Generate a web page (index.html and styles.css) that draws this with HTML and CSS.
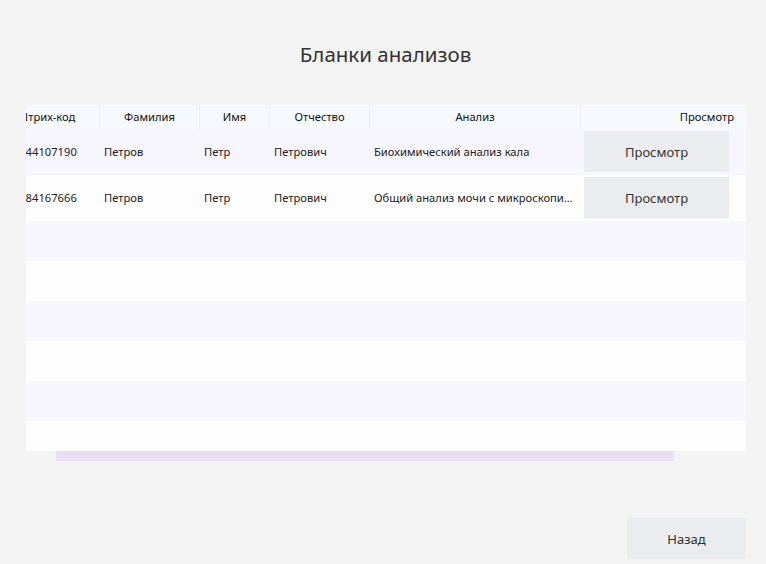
FILE: index.html
```html
<!DOCTYPE html>
<html lang="ru">
<head>
<meta charset="utf-8">
<title>Бланки анализов</title>
<link rel="stylesheet" href="styles.css">
</head>
<body>
<div class="window">
  <h1 class="title">Бланки анализов</h1>
  <div class="grid-area">
    <div class="grid-clip">
      <div class="grid">
        <div class="row head">
          <div class="hc">Штрих-код</div>
          <div class="hc">Фамилия</div>
          <div class="hc">Имя</div>
          <div class="hc">Отчество</div>
          <div class="hc">Анализ</div>
          <div class="hc last">Просмотр</div>
        </div>
        <div class="row data odd">
          <div class="c code">460044107190</div>
          <div class="c">Петров</div>
          <div class="c">Петр</div>
          <div class="c">Петрович</div>
          <div class="c">Биохимический анализ кала</div>
          <div class="c btn-cell"><button class="view-btn">Просмотр</button></div>
        </div>
        <div class="row data even">
          <div class="c code">460084167666</div>
          <div class="c">Петров</div>
          <div class="c">Петр</div>
          <div class="c">Петрович</div>
          <div class="c">Общий анализ мочи с микроскопией осадка</div>
          <div class="c btn-cell"><button class="view-btn">Просмотр</button></div>
        </div>
        <div class="row empty odd"></div>
        <div class="row empty even"></div>
        <div class="row empty odd"></div>
        <div class="row empty even"></div>
        <div class="row empty odd"></div>
        <div class="row empty even"></div>
      </div>
    </div>
    <div class="hscroll"></div>
  </div>
  <div class="footer">
    <button class="back-btn">Назад</button>
  </div>
</div>
</body>
</html>
```
FILE: styles.css
```css
html, body {
  margin: 0;
  padding: 0;
  background: #f3f3f3;
}
body {
  font-family: "Noto Sans", "Open Sans", sans-serif;
  color: #222;
}
.window {
  width: 766px;
  height: 564px;
  display: flex;
  flex-direction: column;
}
.title {
  margin: 0;
  height: 105px;
  box-sizing: border-box;
  padding: 40px 0 0 5px;
  text-align: center;
  font-weight: normal;
  font-size: 20.5px;
  line-height: 28px;
  color: #333;
}
.grid-area {
  padding-left: 26px;
  display: flex;
  flex-direction: column;
}
.grid-clip {
  width: 720px;
  height: 346px;
  overflow: hidden;
  background: #fff;
}
.grid {
  width: 839px;
  margin-left: -33px;
}
.row {
  display: grid;
  grid-template-columns: 107px 100px 70px 100px 211px 251px;
}
.head {
  height: 24px;
  background: #f6f9fe;
}
.hc {
  font-size: 11.2px;
  line-height: 24px;
  text-align: center;
  color: #111;
  border-right: 1px solid #ebf0f7;
  white-space: nowrap;
  overflow: hidden;
}
.hc.last {
  border-right: none;
  text-align: right;
  padding-right: 98px;
}
.data {
  height: 46px;
}
.odd {
  background: #f7f5fd;
}
.even {
  background: #fefefe;
}
.empty {
  height: 40px;
}
.c {
  font-size: 11.2px;
  line-height: 46px;
  padding: 0 4px;
  white-space: nowrap;
  overflow: hidden;
  text-overflow: ellipsis;
  color: #222;
}
.c.code {
  padding-left: 7px;
}
.btn-cell {
  padding: 2px 0 0 3px;
  line-height: normal;
}
.view-btn, .back-btn {
  border: none;
  background: #ebecf0;
  font-family: "Noto Sans", "Open Sans", sans-serif;
  font-size: 13px;
  color: #333;
  padding: 0;
  cursor: pointer;
}
.view-btn {
  width: 145px;
  height: 41px;
}
.hscroll {
  margin-left: 30px;
  width: 618px;
  height: 10px;
  background: #e8def6;
}
.footer {
  display: flex;
  justify-content: flex-end;
  padding: 57px 20px 0 0;
}
.back-btn {
  width: 119px;
  height: 41px;
}
```
